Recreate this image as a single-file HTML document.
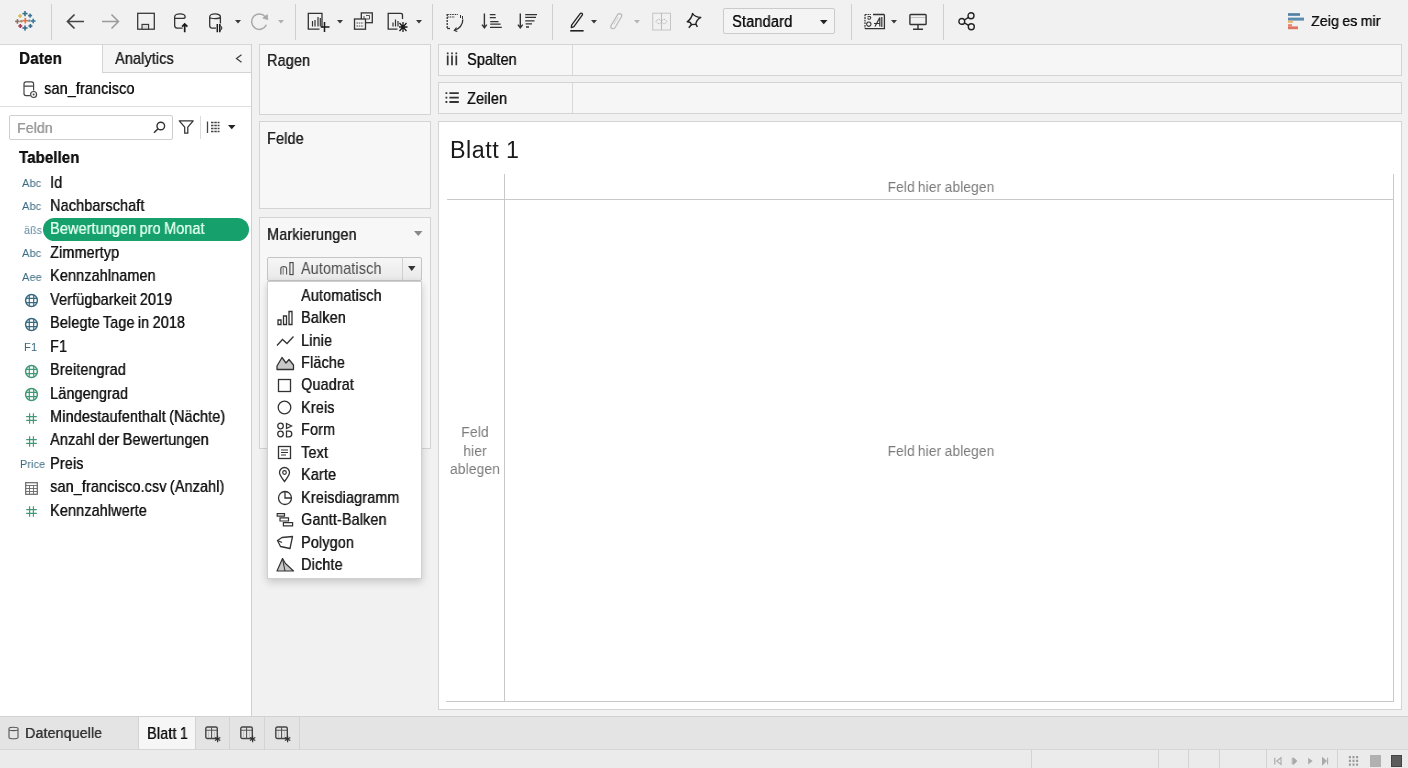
<!DOCTYPE html>
<html><head><meta charset="utf-8"><style>
html,body{margin:0;padding:0;width:1408px;height:768px;overflow:hidden;background:#efefef;}
body{position:relative;font-family:"Liberation Sans",sans-serif;}
.t{position:absolute;white-space:nowrap;line-height:20px;height:20px;will-change:transform;}
svg{overflow:visible}
</style></head><body>
<div style="position:absolute;left:0px;top:0px;width:1408px;height:717px;background:#f1f1f1"></div>
<div style="position:absolute;left:0px;top:44px;width:251px;height:673px;background:#ffffff"></div>
<div style="position:absolute;left:0px;top:44px;width:251px;height:1px;background:#d6d6d6"></div>
<div style="position:absolute;left:251px;top:44px;width:1px;height:673px;background:#d0d0d0"></div>
<div style="position:absolute;left:102px;top:45px;width:149px;height:27px;background:#f5f5f5"></div>
<div style="position:absolute;left:102px;top:45px;width:1px;height:28px;background:#d4d4d4"></div>
<div style="position:absolute;left:102px;top:72px;width:149px;height:1px;background:#d4d4d4"></div>
<div style="position:absolute;left:0px;top:106px;width:251px;height:1px;background:#dedede"></div>
<div style="position:absolute;left:8.5px;top:115px;width:164px;height:25px;background:#fff;border:1px solid #cfcfcf;border-radius:2px;box-sizing:border-box"></div>
<div style="position:absolute;left:200px;top:116px;width:1px;height:23px;background:#dcdcdc"></div>
<div style="position:absolute;left:259px;top:44px;width:172px;height:71px;background:#f7f7f7;border:1px solid #d4d4d4;box-sizing:border-box"></div>
<div style="position:absolute;left:259px;top:121px;width:172px;height:88px;background:#f7f7f7;border:1px solid #d4d4d4;box-sizing:border-box"></div>
<div style="position:absolute;left:259px;top:217px;width:172px;height:232px;background:#f7f7f7;border:1px solid #d4d4d4;box-sizing:border-box"></div>
<div style="position:absolute;left:438px;top:44px;width:964px;height:32px;background:#f6f6f6;border:1px solid #d4d4d4;box-sizing:border-box"></div>
<div style="position:absolute;left:572px;top:45px;width:1px;height:30px;background:#d8d8d8"></div>
<div style="position:absolute;left:438px;top:82px;width:964px;height:32px;background:#f6f6f6;border:1px solid #d4d4d4;box-sizing:border-box"></div>
<div style="position:absolute;left:572px;top:83px;width:1px;height:30px;background:#d8d8d8"></div>
<div style="position:absolute;left:438px;top:121px;width:964px;height:589px;background:#ffffff;border:1px solid #d4d4d4;box-sizing:border-box"></div>
<div style="position:absolute;left:504px;top:174px;width:1px;height:528px;background:#c9c9c9"></div>
<div style="position:absolute;left:447px;top:199px;width:947px;height:1px;background:#c9c9c9"></div>
<div style="position:absolute;left:446px;top:701px;width:948px;height:1px;background:#c9c9c9"></div>
<div style="position:absolute;left:1393px;top:174px;width:1px;height:528px;background:#c9c9c9"></div>
<div style="position:absolute;left:0px;top:716px;width:1408px;height:34px;background:#e4e4e4"></div>
<div style="position:absolute;left:0px;top:716px;width:1408px;height:1px;background:#d2d2d2"></div>
<div style="position:absolute;left:0px;top:749px;width:1408px;height:1px;background:#d6d6d6"></div>
<div style="position:absolute;left:0px;top:750px;width:1408px;height:18px;background:#ebebeb"></div>
<div style="position:absolute;left:139px;top:717px;width:56px;height:32px;background:#f6f6f6"></div>
<div style="position:absolute;left:138px;top:717px;width:1px;height:32px;background:#d3d3d3"></div>
<div style="position:absolute;left:195px;top:717px;width:1px;height:32px;background:#d3d3d3"></div>
<div style="position:absolute;left:229px;top:717px;width:1px;height:32px;background:#d3d3d3"></div>
<div style="position:absolute;left:264px;top:717px;width:1px;height:32px;background:#d3d3d3"></div>
<div style="position:absolute;left:299px;top:717px;width:1px;height:32px;background:#d3d3d3"></div>
<div style="position:absolute;left:1031px;top:750px;width:1px;height:18px;background:#d3d3d3"></div>
<div style="position:absolute;left:1158px;top:750px;width:1px;height:18px;background:#d3d3d3"></div>
<div style="position:absolute;left:1188px;top:750px;width:1px;height:18px;background:#d3d3d3"></div>
<div style="position:absolute;left:1219px;top:750px;width:1px;height:18px;background:#d3d3d3"></div>
<div style="position:absolute;left:1266px;top:750px;width:1px;height:18px;background:#d3d3d3"></div>
<div style="position:absolute;left:1337px;top:750px;width:1px;height:18px;background:#d3d3d3"></div>
<div style="position:absolute;left:51px;top:4px;width:1px;height:36px;background:#cfcfcf"></div>
<div style="position:absolute;left:295px;top:4px;width:1px;height:36px;background:#cfcfcf"></div>
<div style="position:absolute;left:432px;top:4px;width:1px;height:36px;background:#cfcfcf"></div>
<div style="position:absolute;left:552px;top:4px;width:1px;height:36px;background:#cfcfcf"></div>
<div style="position:absolute;left:851px;top:4px;width:1px;height:36px;background:#cfcfcf"></div>
<div style="position:absolute;left:943px;top:4px;width:1px;height:36px;background:#cfcfcf"></div>
<svg style="position:absolute;left:14px;top:7px" width="24" height="28" viewBox="0 0 24 28"><defs><filter id="lb" x="-20%" y="-20%" width="140%" height="140%"><feGaussianBlur stdDeviation="0.45"/></filter></defs><g filter="url(#lb)"><rect x="10.2" y="3.9999999999999996" width="1.6" height="5.2" fill="#3a6d8e"/><rect x="8.4" y="5.8" width="5.2" height="1.6" fill="#3a6d8e"/><rect x="15.3" y="6.6" width="1.6" height="4" fill="#3d7590"/><rect x="14.100000000000001" y="7.8" width="4" height="1.6" fill="#3d7590"/><rect x="18.400000000000002" y="11.7" width="1.6" height="4.6" fill="#3a7c9c"/><rect x="16.900000000000002" y="13.2" width="4.6" height="1.6" fill="#3a7c9c"/><rect x="15.599999999999998" y="17.0" width="1.6" height="4" fill="#3a6d8e"/><rect x="14.399999999999999" y="18.2" width="4" height="1.6" fill="#3a6d8e"/><rect x="10.2" y="18.4" width="1.6" height="5.2" fill="#3a6d8e"/><rect x="8.4" y="20.2" width="5.2" height="1.6" fill="#3a6d8e"/><rect x="5.500000000000001" y="17.0" width="1.6" height="4" fill="#a83a56"/><rect x="4.300000000000001" y="18.2" width="4" height="1.6" fill="#a83a56"/><rect x="2.5999999999999988" y="12.099999999999998" width="1.6" height="4.6" fill="#8c7462"/><rect x="1.0999999999999988" y="13.599999999999998" width="4.6" height="1.6" fill="#8c7462"/><rect x="5.300000000000002" y="7.0" width="1.6" height="4" fill="#d6bd5a"/><rect x="4.100000000000001" y="8.2" width="4" height="1.6" fill="#d6bd5a"/><rect x="10.5" y="10.899999999999999" width="1.6" height="5.6" fill="#e0763e"/><rect x="8.5" y="12.899999999999999" width="5.6" height="1.6" fill="#e0763e"/><rect x="6.599999999999999" y="12.899999999999999" width="1.6" height="2.6" fill="#b08a72"/><rect x="6.099999999999999" y="13.399999999999999" width="2.6" height="1.6" fill="#b08a72"/><rect x="14.599999999999998" y="12.5" width="1.6" height="2.6" fill="#7f9aab"/><rect x="14.099999999999998" y="13.0" width="2.6" height="1.6" fill="#7f9aab"/></g></svg>
<svg style="position:absolute;left:66px;top:13px" width="19" height="17" viewBox="0 0 19 17"><path d="M1.5 8.5H18M8.5 1.5L1.5 8.5L8.5 15.5" fill="none" stroke="#444" stroke-width="1.7"/></svg>
<svg style="position:absolute;left:101px;top:13px" width="19" height="17" viewBox="0 0 19 17"><path d="M1 8.5H17.5M10.5 1.5L17.5 8.5L10.5 15.5" fill="none" stroke="#9a9a9a" stroke-width="1.5"/></svg>
<svg style="position:absolute;left:137px;top:12px" width="18" height="19" viewBox="0 0 18 19"><rect x="0.7" y="1.3" width="16.6" height="15.9" fill="none" stroke="#333" stroke-width="1.25"/><rect x="5" y="12.4" width="6.6" height="4.8" fill="#dcdcdc" stroke="#333" stroke-width="1.1"/></svg>
<svg style="position:absolute;left:173px;top:12px" width="17" height="21" viewBox="0 0 17 21"><path d="M1.65 5C1.65 0.9 12.15 0.9 12.15 5C12.15 6.4 11 6.4 10 6.4H1.65M1.65 5V13.6Q1.65 16.05 4 16.05H9.6" fill="none" stroke="#333" stroke-width="1.3"/><path d="M11.7 20.3V11.9M9.1 14.6L11.7 11.9L14.4 14.6" fill="none" stroke="#1a1a1a" stroke-width="1.7"/></svg>
<svg style="position:absolute;left:208px;top:12px" width="16" height="21" viewBox="0 0 16 21"><path d="M1.7 5C1.7 0.9 12.4 0.9 12.4 5V11.6M1.7 5C1.7 7.2 12.4 7.2 12.4 5M1.7 5V13.6Q1.7 16.1 4 16.1H8" fill="none" stroke="#333" stroke-width="1.3"/><path d="M9.3 12V20.3M11.8 12V20.3" stroke="#1a1a1a" stroke-width="1.5"/><path d="M12.5 13.5L14 16L12.5 18.5" fill="none" stroke="#1a1a1a" stroke-width="1"/></svg>
<svg style="position:absolute;left:234.5px;top:20px" width="6" height="4" viewBox="0 0 6 4"><path d="M0 0H6L3 3.6Z" fill="#3a3a3a"/></svg>
<svg style="position:absolute;left:249px;top:12px" width="20" height="19" viewBox="0 0 20 19"><path d="M16.6 5.2A7.7 7.7 0 1 0 17.4 12.8" fill="none" stroke="#a8a8a8" stroke-width="1.5"/><path d="M13.8 6.2L18.8 7.6L18.3 2.6Z" fill="#a8a8a8" stroke="#a8a8a8" stroke-width="0.8" stroke-linejoin="round"/></svg>
<svg style="position:absolute;left:278.4px;top:20px" width="6" height="4" viewBox="0 0 6 4"><path d="M0 0H6L3 3.6Z" fill="#b0b0b0"/></svg>
<svg style="position:absolute;left:307px;top:12px" width="24" height="21" viewBox="0 0 24 21"><path d="M15 15.6V1.3H1.3V17.2H12.5" fill="none" stroke="#333" stroke-width="1.3"/><path d="M5.5 14.5V9M8 14.5V8M11 14.5V5M13.3 14.5V6" stroke="#333" stroke-width="1.2"/><path d="M17.5 10V20M13.8 15H22.5" stroke="#1a1a1a" stroke-width="1.5"/></svg>
<svg style="position:absolute;left:337.3px;top:20px" width="6" height="4" viewBox="0 0 6 4"><path d="M0 0H6L3 3.6Z" fill="#3a3a3a"/></svg>
<svg style="position:absolute;left:353px;top:11px" width="21" height="20" viewBox="0 0 21 20"><rect x="8.3" y="1.9" width="11" height="9.8" fill="none" stroke="#333" stroke-width="1.3"/><path d="M11 5V8.5M13 4.5H16.5V8H13" fill="none" stroke="#444" stroke-width="0.9"/><rect x="1.5" y="8" width="11" height="10.2" fill="#f2f2f2" stroke="#333" stroke-width="1.3"/><path d="M3.5 12H10.5M3.5 15H10.5" stroke="#444" stroke-width="1" stroke-dasharray="1.5 0.8"/></svg>
<svg style="position:absolute;left:387px;top:12px" width="22" height="21" viewBox="0 0 22 21"><path d="M15.5 7V3.2Q15.5 1.3 13.6 1.3H1.2V17.2H10.5" fill="none" stroke="#333" stroke-width="1.3"/><path d="M6 14.5V10.5M8.5 14.5V7.5M11 14.5V9" stroke="#333" stroke-width="1.2"/><path d="M12.5 11L19.5 19M19.5 11L12.5 19M16 10V20M12 15H20.5" stroke="#1a1a1a" stroke-width="1.3"/></svg>
<svg style="position:absolute;left:416px;top:20px" width="6" height="4" viewBox="0 0 6 4"><path d="M0 0H6L3 3.6Z" fill="#3a3a3a"/></svg>
<svg style="position:absolute;left:446px;top:13px" width="20" height="19" viewBox="0 0 20 19"><path d="M1.2 1.5H12M1.2 4H9" stroke="#333" stroke-width="1.1" stroke-dasharray="1.6 0.9"/><path d="M1.2 1V15.5" stroke="#333" stroke-width="1.3" stroke-dasharray="2 1"/><path d="M1.2 15.5H4" stroke="#333" stroke-width="1.3"/><path d="M16.8 6.5C17 12 13 16 8.5 17.3" fill="none" stroke="#333" stroke-width="1.3"/><path d="M10.5 14.5L8.3 17.4L11.3 18.6" fill="none" stroke="#333" stroke-width="1.1"/><path d="M14.5 2V5M16.5 3V6" stroke="#333" stroke-width="1"/></svg>
<svg style="position:absolute;left:481px;top:13px" width="22" height="17" viewBox="0 0 22 17"><path d="M3.4 0.5V14.6M1 11.6L3.4 14.8L5.8 11.6" fill="none" stroke="#333" stroke-width="1.4"/><path d="M8.8 1.6H14.5M8.8 4.6H14.8M9.2 8.6H17.5M9.2 11.2H19.6M9 14.4H20.8" stroke="#333" stroke-width="1.3"/></svg>
<svg style="position:absolute;left:517px;top:13px" width="21" height="17" viewBox="0 0 21 17"><path d="M3.3 0.5V14.6M0.9 11.6L3.3 14.8L5.7 11.6" fill="none" stroke="#333" stroke-width="1.4"/><path d="M8.2 1.6H20M8.2 4.4H19M8.2 7.8H17.5M8.6 10.8H15M9 14H12" stroke="#333" stroke-width="1.3"/></svg>
<svg style="position:absolute;left:569px;top:12px" width="16" height="21" viewBox="0 0 16 21"><path d="M2.6 13.2L11.2 1.6C12 0.5 14.1 1.6 13.4 2.8L4.9 14.6L2.3 15.6Z" fill="none" stroke="#222" stroke-width="1.3" stroke-linejoin="round"/><path d="M1.2 18.8H14.6" stroke="#222" stroke-width="1.6"/></svg>
<svg style="position:absolute;left:591.4px;top:20px" width="6" height="4" viewBox="0 0 6 4"><path d="M0 0H6L3 3.6Z" fill="#3a3a3a"/></svg>
<svg style="position:absolute;left:609px;top:12px" width="14" height="19" viewBox="0 0 14 19"><path d="M2 13.6L8.6 2.6C9.9 0.6 13.6 2 12.6 4.6L6 15.8C4.6 17.8 0.8 16.4 2 13.6Z" fill="none" stroke="#b8b8b8" stroke-width="1.1"/><path d="M5 12.2L9.4 5" stroke="#c0c0c0" stroke-width="0.9" stroke-dasharray="1.4 0.8"/></svg>
<svg style="position:absolute;left:634px;top:20px" width="6" height="4" viewBox="0 0 6 4"><path d="M0 0H6L3 3.6Z" fill="#b4b4b4"/></svg>
<svg style="position:absolute;left:652px;top:12px" width="20" height="19" viewBox="0 0 20 19"><rect x="0.7" y="1.2" width="17.8" height="16.8" fill="none" stroke="#c4c4c4" stroke-width="1"/><path d="M9.5 1V18" stroke="#bbb" stroke-width="1"/><path d="M4 9.5C6 6.5 8 6.5 9.5 9.5C11 6.5 13 6.5 15 9.5C13 12.5 11 12.5 9.5 9.5C8 12.5 6 12.5 4 9.5Z" fill="none" stroke="#b0b0b0" stroke-width="0.9" stroke-dasharray="1.2 0.6"/></svg>
<svg style="position:absolute;left:686px;top:12px" width="16" height="17" viewBox="0 0 16 17"><path d="M6.6 1.5Q8.8 5.2 14.8 5.4Q10.2 8 9.8 12.2L5.5 12.6Q4.6 9.6 1.2 9.7Q5.6 6.6 6.6 1.5Z" fill="none" stroke="#222" stroke-width="1.4" stroke-linejoin="round"/><path d="M5.5 12.6L2.8 15.8M9.8 12.2L11.4 14.9" stroke="#222" stroke-width="1.5"/></svg>
<div style="position:absolute;left:722.5px;top:8px;width:112px;height:26px;background:#f4f4f4;border:1px solid #cbcbcb;border-radius:2px;box-sizing:border-box"></div>
<svg style="position:absolute;left:820px;top:19.5px" width="8" height="5" viewBox="0 0 8 5"><path d="M0 0H7.5L3.75 4.2Z" fill="#222"/></svg>
<svg style="position:absolute;left:864px;top:13px" width="22" height="17" viewBox="0 0 22 17"><path d="M20.4 1.5V15.6H1M20.4 1.5H9" fill="none" stroke="#333" stroke-width="1.3"/><path d="M1 1.5H7M1 1.5V15.6" fill="none" stroke="#333" stroke-width="1.2" stroke-dasharray="1.8 0.8"/><path d="M3.5 4.2C5 2.8 7.5 3.5 6.5 5.5C5.5 7 3.5 6 4 5M4.8 9A2.2 2.2 0 1 0 4.81 9" fill="none" stroke="#333" stroke-width="1.1"/><path d="M11 13.5L15.8 4.5V13.5M10 10.5H15.5M17.8 4V14" fill="none" stroke="#333" stroke-width="1.2"/></svg>
<svg style="position:absolute;left:891px;top:20px" width="6" height="4" viewBox="0 0 6 4"><path d="M0 0H6L3 3.6Z" fill="#3a3a3a"/></svg>
<svg style="position:absolute;left:908px;top:13px" width="20" height="18" viewBox="0 0 20 18"><rect x="1.9" y="1.5" width="16.2" height="10" rx="0.8" fill="none" stroke="#333" stroke-width="1.4"/><path d="M3 4.5H17" stroke="#c0c0c0" stroke-width="1"/><path d="M10 11.5V16.3M5 16.3H15" stroke="#333" stroke-width="1.4"/></svg>
<svg style="position:absolute;left:958px;top:12px" width="18" height="19" viewBox="0 0 18 19"><circle cx="13" cy="3.8" r="3" fill="none" stroke="#222" stroke-width="1.4"/><circle cx="3.8" cy="9.4" r="2.9" fill="none" stroke="#222" stroke-width="1.4"/><circle cx="13.3" cy="14.8" r="3" fill="none" stroke="#222" stroke-width="1.4"/><path d="M6.4 8L10.5 5.3M6.4 10.9L10.6 13.3" stroke="#222" stroke-width="1.4"/></svg>
<svg style="position:absolute;left:1288px;top:12px" width="17" height="18" viewBox="0 0 17 18"><rect x="0" y="1.2" width="12" height="2.6" fill="#4d7ea3"/><rect x="0" y="5.6" width="16" height="3" fill="#5a8cb0"/><rect x="0" y="8.6" width="5" height="2.2" fill="#e9b46a"/><rect x="0" y="12.2" width="4" height="2.2" fill="#e48270"/><rect x="0" y="14.4" width="10" height="2.8" fill="#e07462"/></svg>
<div class="t" style="left:731.60px;top:12.00px;font-size:15.91px;font-weight:400;color:#111;transform:scaleX(0.9174);letter-spacing:0.131px;word-spacing:-0.872px;transform-origin:0 0;text-shadow:0.35px 0 0 #111;">Standard</div>
<div class="t" style="left:1310.50px;top:11.00px;font-size:15.37px;font-weight:400;color:#111;transform:scaleX(0.9174);letter-spacing:0.131px;word-spacing:-0.872px;transform-origin:0 0;text-shadow:0.35px 0 0 #111;">Zeig es mir</div>
<div class="t" style="left:18.60px;top:49.00px;font-size:16.57px;font-weight:700;color:#111;transform:scaleX(0.9174);letter-spacing:0.131px;word-spacing:-0.872px;transform-origin:0 0;text-shadow:0.35px 0 0 #111;">Daten</div>
<div class="t" style="left:115.00px;top:49.00px;font-size:15.70px;font-weight:400;color:#222;transform:scaleX(0.9174);letter-spacing:0.131px;word-spacing:-0.872px;transform-origin:0 0;text-shadow:0.35px 0 0 #222;">Analytics</div>
<svg style="position:absolute;left:235px;top:54px" width="8" height="9" viewBox="0 0 8 9"><path d="M6.5 0.7L1.5 4.5L6.5 8.3" fill="none" stroke="#444" stroke-width="1.3"/></svg>
<svg style="position:absolute;left:23px;top:81px" width="16" height="18" viewBox="0 0 16 18"><path d="M1 3Q1 0.9 3 0.9H8.6Q10.6 0.9 10.6 3V9.5M1 5.2H10.6M1 3V12.6Q1 14.6 3 14.6H7" fill="none" stroke="#444" stroke-width="1.2"/><circle cx="10.6" cy="13.5" r="3" fill="#fff" stroke="#444" stroke-width="1.2"/><circle cx="10.6" cy="13.5" r="1" fill="#444"/></svg>
<div class="t" style="left:44.00px;top:79.00px;font-size:15.70px;font-weight:400;color:#111;transform:scaleX(0.9174);letter-spacing:0.131px;word-spacing:-0.872px;transform-origin:0 0;text-shadow:0.35px 0 0 #111;">san_francisco</div>
<div class="t" style="left:17.00px;top:118.00px;font-size:15.26px;font-weight:400;color:#9a9a9a;transform:scaleX(0.9174);letter-spacing:0.131px;word-spacing:-0.872px;transform-origin:0 0;text-shadow:0.35px 0 0 #9a9a9a;">Feldn</div>
<svg style="position:absolute;left:153px;top:121px" width="13" height="13" viewBox="0 0 13 13"><circle cx="7.8" cy="5" r="3.8" fill="none" stroke="#333" stroke-width="1.4"/><path d="M5 7.8L1 11.8" stroke="#333" stroke-width="1.6"/></svg>
<svg style="position:absolute;left:178px;top:119px" width="17" height="16" viewBox="0 0 17 16"><path d="M1.3 1.8H15.2L9.8 8.2V14.2H6.7V8.2Z" fill="none" stroke="#333" stroke-width="1.25" stroke-linejoin="round"/></svg>
<svg style="position:absolute;left:206px;top:121px" width="15" height="13" viewBox="0 0 15 13"><path d="M1.5 0.5V12" stroke="#444" stroke-width="1.3"/><path d="M5 1.5H13.5M5 4.5H13.5M5 7.5H13.5M5 10.5H13.5" stroke="#444" stroke-width="1.3" stroke-dasharray="2.5 0.8"/></svg>
<svg style="position:absolute;left:227.5px;top:125px" width="8" height="5" viewBox="0 0 8 5"><path d="M0 0H7.5L3.75 4.2Z" fill="#222"/></svg>
<div class="t" style="left:18.90px;top:147.00px;font-size:16.24px;font-weight:700;color:#111;transform:scaleX(0.9174);letter-spacing:0.131px;word-spacing:-0.872px;transform-origin:0 0;text-shadow:0.35px 0 0 #111;">Tabellen</div>
<div class="t" style="left:50.40px;top:173.00px;font-size:15.70px;font-weight:400;color:#151515;transform:scaleX(0.9174);letter-spacing:0.131px;word-spacing:-0.872px;transform-origin:0 0;text-shadow:0.35px 0 0 #151515;">Id</div>
<div class="t" style="left:22.40px;top:173.00px;font-size:11.33px;font-weight:400;color:#3a6a82;transform:scaleX(0.9709);letter-spacing:0.124px;word-spacing:-0.824px;transform-origin:0 0;">Abc</div>
<div class="t" style="left:50.40px;top:196.00px;font-size:15.70px;font-weight:400;color:#151515;transform:scaleX(0.9174);letter-spacing:0.131px;word-spacing:-0.872px;transform-origin:0 0;text-shadow:0.35px 0 0 #151515;">Nachbarschaft</div>
<div class="t" style="left:22.40px;top:196.00px;font-size:11.33px;font-weight:400;color:#3a6a82;transform:scaleX(0.9709);letter-spacing:0.124px;word-spacing:-0.824px;transform-origin:0 0;">Abc</div>
<div style="position:absolute;left:42.5px;top:218px;width:206px;height:23px;background:#15a06c;border-radius:11.5px"></div>
<div class="t" style="left:50.40px;top:219.00px;font-size:15.70px;font-weight:400;color:#dcfdea;transform:scaleX(0.9174);letter-spacing:0.131px;word-spacing:-0.872px;transform-origin:0 0;text-shadow:0.35px 0 0 #dcfdea;">Bewertungen pro Monat</div>
<div class="t" style="left:23.50px;top:220.00px;font-size:10.92px;font-weight:400;color:#5d87a0;transform:scaleX(0.9709);letter-spacing:0.124px;word-spacing:-0.824px;transform-origin:0 0;">äßs</div>
<div class="t" style="left:50.40px;top:243.00px;font-size:15.70px;font-weight:400;color:#151515;transform:scaleX(0.9174);letter-spacing:0.131px;word-spacing:-0.872px;transform-origin:0 0;text-shadow:0.35px 0 0 #151515;">Zimmertyp</div>
<div class="t" style="left:22.40px;top:243.00px;font-size:11.33px;font-weight:400;color:#3a6a82;transform:scaleX(0.9709);letter-spacing:0.124px;word-spacing:-0.824px;transform-origin:0 0;">Abc</div>
<div class="t" style="left:50.40px;top:266.00px;font-size:15.70px;font-weight:400;color:#151515;transform:scaleX(0.9174);letter-spacing:0.131px;word-spacing:-0.872px;transform-origin:0 0;text-shadow:0.35px 0 0 #151515;">Kennzahlnamen</div>
<div class="t" style="left:21.80px;top:267.00px;font-size:11.33px;font-weight:400;color:#3a6a82;transform:scaleX(0.9709);letter-spacing:0.124px;word-spacing:-0.824px;transform-origin:0 0;">Aee</div>
<div class="t" style="left:50.40px;top:290.00px;font-size:15.70px;font-weight:400;color:#151515;transform:scaleX(0.9174);letter-spacing:0.131px;word-spacing:-0.872px;transform-origin:0 0;text-shadow:0.35px 0 0 #151515;">Verfügbarkeit 2019</div>
<svg style="position:absolute;left:24.3px;top:293.25px" width="15" height="15" viewBox="0 0 15 15"><circle cx="7.5" cy="7.5" r="5.9" fill="none" stroke="#3a6a82" stroke-width="1.5"/><path d="M5.3 2V13M9.7 2V13M2 5.3H13M2 9.7H13" stroke="#3a6a82" stroke-width="1.2"/></svg>
<div class="t" style="left:50.40px;top:313.00px;font-size:15.70px;font-weight:400;color:#151515;transform:scaleX(0.9174);letter-spacing:0.131px;word-spacing:-0.872px;transform-origin:0 0;text-shadow:0.35px 0 0 #151515;">Belegte Tage in 2018</div>
<svg style="position:absolute;left:24.3px;top:316.7px" width="15" height="15" viewBox="0 0 15 15"><circle cx="7.5" cy="7.5" r="5.9" fill="none" stroke="#3a6a82" stroke-width="1.5"/><path d="M5.3 2V13M9.7 2V13M2 5.3H13M2 9.7H13" stroke="#3a6a82" stroke-width="1.2"/></svg>
<div class="t" style="left:50.40px;top:337.00px;font-size:15.70px;font-weight:400;color:#151515;transform:scaleX(0.9174);letter-spacing:0.131px;word-spacing:-0.872px;transform-origin:0 0;text-shadow:0.35px 0 0 #151515;">F1</div>
<div class="t" style="left:24.00px;top:337.00px;font-size:11.12px;font-weight:400;color:#3a6a82;transform:scaleX(0.9709);letter-spacing:0.124px;word-spacing:-0.824px;transform-origin:0 0;">F1</div>
<div class="t" style="left:50.40px;top:360.00px;font-size:15.70px;font-weight:400;color:#151515;transform:scaleX(0.9174);letter-spacing:0.131px;word-spacing:-0.872px;transform-origin:0 0;text-shadow:0.35px 0 0 #151515;">Breitengrad</div>
<svg style="position:absolute;left:24.3px;top:363.6px" width="15" height="15" viewBox="0 0 15 15"><circle cx="7.5" cy="7.5" r="5.9" fill="none" stroke="#3f9a74" stroke-width="1.5"/><path d="M5.3 2V13M9.7 2V13M2 5.3H13M2 9.7H13" stroke="#3f9a74" stroke-width="1.2"/></svg>
<div class="t" style="left:50.40px;top:384.00px;font-size:15.70px;font-weight:400;color:#151515;transform:scaleX(0.9174);letter-spacing:0.131px;word-spacing:-0.872px;transform-origin:0 0;text-shadow:0.35px 0 0 #151515;">Längengrad</div>
<svg style="position:absolute;left:24.3px;top:387.04999999999995px" width="15" height="15" viewBox="0 0 15 15"><circle cx="7.5" cy="7.5" r="5.9" fill="none" stroke="#3f9a74" stroke-width="1.5"/><path d="M5.3 2V13M9.7 2V13M2 5.3H13M2 9.7H13" stroke="#3f9a74" stroke-width="1.2"/></svg>
<div class="t" style="left:50.40px;top:407.00px;font-size:15.70px;font-weight:400;color:#151515;transform:scaleX(0.9174);letter-spacing:0.131px;word-spacing:-0.872px;transform-origin:0 0;text-shadow:0.35px 0 0 #151515;">Mindestaufenthalt (Nächte)</div>
<svg style="position:absolute;left:25px;top:411.5px" width="13" height="13" viewBox="0 0 13 13"><path d="M4.6 1.2V11.8M8.4 1.2V11.8M1.2 4.6H11.8M1.2 8.4H11.8" stroke="#3f9a74" stroke-width="1.15"/></svg>
<div class="t" style="left:50.40px;top:430.00px;font-size:15.70px;font-weight:400;color:#151515;transform:scaleX(0.9174);letter-spacing:0.131px;word-spacing:-0.872px;transform-origin:0 0;text-shadow:0.35px 0 0 #151515;">Anzahl der Bewertungen</div>
<svg style="position:absolute;left:25px;top:434.95px" width="13" height="13" viewBox="0 0 13 13"><path d="M4.6 1.2V11.8M8.4 1.2V11.8M1.2 4.6H11.8M1.2 8.4H11.8" stroke="#3f9a74" stroke-width="1.15"/></svg>
<div class="t" style="left:50.40px;top:454.00px;font-size:15.70px;font-weight:400;color:#151515;transform:scaleX(0.9174);letter-spacing:0.131px;word-spacing:-0.872px;transform-origin:0 0;text-shadow:0.35px 0 0 #151515;">Preis</div>
<div class="t" style="left:19.60px;top:454.00px;font-size:11.12px;font-weight:400;color:#3a6a82;transform:scaleX(0.9709);letter-spacing:0.124px;word-spacing:-0.824px;transform-origin:0 0;">Price</div>
<div class="t" style="left:50.40px;top:477.00px;font-size:15.70px;font-weight:400;color:#151515;transform:scaleX(0.9174);letter-spacing:0.131px;word-spacing:-0.872px;transform-origin:0 0;text-shadow:0.35px 0 0 #151515;">san_francisco.csv (Anzahl)</div>
<svg style="position:absolute;left:25px;top:481.84999999999997px" width="13" height="13" viewBox="0 0 13 13"><rect x="0.7" y="0.7" width="11.6" height="11.6" fill="none" stroke="#666" stroke-width="1.2"/><path d="M0.7 3.5H12.3M0.7 6.5H12.3M0.7 9.5H12.3M4.5 3.5V12.3M8.5 3.5V12.3" stroke="#666" stroke-width="0.9"/></svg>
<div class="t" style="left:50.40px;top:501.00px;font-size:15.70px;font-weight:400;color:#151515;transform:scaleX(0.9174);letter-spacing:0.131px;word-spacing:-0.872px;transform-origin:0 0;text-shadow:0.35px 0 0 #151515;">Kennzahlwerte</div>
<svg style="position:absolute;left:25px;top:505.29999999999995px" width="13" height="13" viewBox="0 0 13 13"><path d="M4.6 1.2V11.8M8.4 1.2V11.8M1.2 4.6H11.8M1.2 8.4H11.8" stroke="#3f9a74" stroke-width="1.15"/></svg>
<div class="t" style="left:267.10px;top:51.00px;font-size:15.70px;font-weight:400;color:#222;transform:scaleX(0.9174);letter-spacing:0.131px;word-spacing:-0.872px;transform-origin:0 0;text-shadow:0.35px 0 0 #222;">Ragen</div>
<div class="t" style="left:267.10px;top:129.00px;font-size:15.70px;font-weight:400;color:#222;transform:scaleX(0.9174);letter-spacing:0.131px;word-spacing:-0.872px;transform-origin:0 0;text-shadow:0.35px 0 0 #222;">Felde</div>
<div class="t" style="left:267.30px;top:225.00px;font-size:15.70px;font-weight:400;color:#222;transform:scaleX(0.9174);letter-spacing:0.131px;word-spacing:-0.872px;transform-origin:0 0;text-shadow:0.35px 0 0 #222;">Markierungen</div>
<svg style="position:absolute;left:414px;top:231px" width="9" height="6" viewBox="0 0 9 6"><path d="M0 0H8.5L4.25 5Z" fill="#888"/></svg>
<div style="position:absolute;left:267px;top:257px;width:155px;height:24px;background:linear-gradient(#f6f6f6,#e9e9e9);border:1px solid #c4c4c4;border-radius:2px;box-sizing:border-box"></div>
<div style="position:absolute;left:402px;top:258px;width:1px;height:22px;background:#d0d0d0"></div>
<svg style="position:absolute;left:408px;top:266px" width="8" height="6" viewBox="0 0 8 6"><path d="M0 0H7.5L3.75 5Z" fill="#333"/></svg>
<svg style="position:absolute;left:279px;top:261px" width="16" height="15" viewBox="0 0 16 15"><path d="M1.8 13.6V7.6Q1.8 5.6 4.8 5.6Q7.6 5.6 7.6 7.6V13.6" fill="none" stroke="#555" stroke-width="1.1"/><path d="M3 7V13.6M4.5 6.5V13.6" stroke="#999" stroke-width="0.9"/><rect x="10.9" y="1.6" width="3.2" height="12" fill="none" stroke="#444" stroke-width="1.1"/></svg>
<div class="t" style="left:301.00px;top:259.00px;font-size:15.70px;font-weight:400;color:#4a4a4a;transform:scaleX(0.9174);letter-spacing:0.131px;word-spacing:-0.872px;transform-origin:0 0;">Automatisch</div>
<div style="position:absolute;left:267px;top:281px;width:155px;height:298px;background:#fff;border:1px solid #cfcfcf;box-sizing:border-box;box-shadow:0 3px 8px rgba(0,0,0,0.18)"></div>
<div class="t" style="left:301.20px;top:286.00px;font-size:15.70px;font-weight:400;color:#1a1a1a;transform:scaleX(0.9174);letter-spacing:0.131px;word-spacing:-0.872px;transform-origin:0 0;text-shadow:0.35px 0 0 #1a1a1a;">Automatisch</div>
<div class="t" style="left:301.20px;top:308.00px;font-size:15.70px;font-weight:400;color:#1a1a1a;transform:scaleX(0.9174);letter-spacing:0.131px;word-spacing:-0.872px;transform-origin:0 0;text-shadow:0.35px 0 0 #1a1a1a;">Balken</div>
<svg style="position:absolute;left:276px;top:310px" width="18" height="16" viewBox="0 0 18 16"><path d="M2 14.5V10H5V14.5ZM7.5 14.5V6H10.5V14.5ZM13 14.5V1.5H16V14.5Z" fill="none" stroke="#333" stroke-width="1.3"/></svg>
<div class="t" style="left:301.20px;top:331.00px;font-size:15.70px;font-weight:400;color:#1a1a1a;transform:scaleX(0.9174);letter-spacing:0.131px;word-spacing:-0.872px;transform-origin:0 0;text-shadow:0.35px 0 0 #1a1a1a;">Linie</div>
<svg style="position:absolute;left:276px;top:335px" width="19" height="12" viewBox="0 0 19 12"><path d="M1 10.5L6.5 4.5L11 8.5L17.5 1.5" fill="none" stroke="#333" stroke-width="1.3"/></svg>
<div class="t" style="left:301.20px;top:353.00px;font-size:15.70px;font-weight:400;color:#1a1a1a;transform:scaleX(0.9174);letter-spacing:0.131px;word-spacing:-0.872px;transform-origin:0 0;text-shadow:0.35px 0 0 #1a1a1a;">Fläche</div>
<svg style="position:absolute;left:276px;top:356px" width="19" height="15" viewBox="0 0 19 15"><path d="M1 13.5V10L6 1.5L10 7L13 3.5L17.5 9V13.5Z" fill="#c8c8c8" stroke="#333" stroke-width="1.3" stroke-linejoin="round"/></svg>
<div class="t" style="left:301.20px;top:375.00px;font-size:15.70px;font-weight:400;color:#1a1a1a;transform:scaleX(0.9174);letter-spacing:0.131px;word-spacing:-0.872px;transform-origin:0 0;text-shadow:0.35px 0 0 #1a1a1a;">Quadrat</div>
<svg style="position:absolute;left:277px;top:378px" width="15" height="15" viewBox="0 0 15 15"><rect x="1.5" y="1.5" width="12" height="12" fill="none" stroke="#333" stroke-width="1.3"/></svg>
<div class="t" style="left:301.20px;top:398.00px;font-size:15.70px;font-weight:400;color:#1a1a1a;transform:scaleX(0.9174);letter-spacing:0.131px;word-spacing:-0.872px;transform-origin:0 0;text-shadow:0.35px 0 0 #1a1a1a;">Kreis</div>
<svg style="position:absolute;left:277px;top:400px" width="15" height="15" viewBox="0 0 15 15"><circle cx="7.5" cy="7.5" r="6.3" fill="none" stroke="#333" stroke-width="1.3"/></svg>
<div class="t" style="left:301.20px;top:420.00px;font-size:15.70px;font-weight:400;color:#1a1a1a;transform:scaleX(0.9174);letter-spacing:0.131px;word-spacing:-0.872px;transform-origin:0 0;text-shadow:0.35px 0 0 #1a1a1a;">Form</div>
<svg style="position:absolute;left:276px;top:422px" width="18" height="16" viewBox="0 0 18 16"><circle cx="4.5" cy="4" r="2.8" fill="none" stroke="#333" stroke-width="1.3"/><circle cx="4.5" cy="12" r="2.8" fill="none" stroke="#333" stroke-width="1.3"/><path d="M10.5 1.5L15.5 4L10.5 6.5Z" fill="none" stroke="#333" stroke-width="1.3"/><path d="M10.5 9.2H13A2.8 2.8 0 0 1 13 14.8H10.5Z" fill="none" stroke="#333" stroke-width="1.3"/></svg>
<div class="t" style="left:301.20px;top:443.00px;font-size:15.70px;font-weight:400;color:#1a1a1a;transform:scaleX(0.9174);letter-spacing:0.131px;word-spacing:-0.872px;transform-origin:0 0;text-shadow:0.35px 0 0 #1a1a1a;">Text</div>
<svg style="position:absolute;left:277px;top:445px" width="15" height="15" viewBox="0 0 15 15"><rect x="1.5" y="1.5" width="12" height="12" fill="none" stroke="#333" stroke-width="1.3"/><path d="M4 5H11M4 7.5H11M4 10H9" stroke="#333" stroke-width="1"/></svg>
<div class="t" style="left:301.20px;top:465.00px;font-size:15.70px;font-weight:400;color:#1a1a1a;transform:scaleX(0.9174);letter-spacing:0.131px;word-spacing:-0.872px;transform-origin:0 0;text-shadow:0.35px 0 0 #1a1a1a;">Karte</div>
<svg style="position:absolute;left:278px;top:467px" width="13" height="16" viewBox="0 0 13 16"><path d="M6.5 14.5C3 10 1.5 7.5 1.5 5.5A5 5 0 0 1 11.5 5.5C11.5 7.5 10 10 6.5 14.5Z" fill="none" stroke="#333" stroke-width="1.3"/><circle cx="6.5" cy="5.5" r="1.8" fill="none" stroke="#333" stroke-width="1.2"/></svg>
<div class="t" style="left:301.20px;top:488.00px;font-size:15.70px;font-weight:400;color:#1a1a1a;transform:scaleX(0.9174);letter-spacing:0.131px;word-spacing:-0.872px;transform-origin:0 0;text-shadow:0.35px 0 0 #1a1a1a;">Kreisdiagramm</div>
<svg style="position:absolute;left:277px;top:490px" width="16" height="16" viewBox="0 0 16 16"><circle cx="8" cy="8" r="6.5" fill="none" stroke="#333" stroke-width="1.3"/><path d="M8 1.5V8H14.5" fill="none" stroke="#333" stroke-width="1.3"/></svg>
<div class="t" style="left:301.20px;top:510.00px;font-size:15.70px;font-weight:400;color:#1a1a1a;transform:scaleX(0.9174);letter-spacing:0.131px;word-spacing:-0.872px;transform-origin:0 0;text-shadow:0.35px 0 0 #1a1a1a;">Gantt-Balken</div>
<svg style="position:absolute;left:276px;top:512px" width="18" height="16" viewBox="0 0 18 16"><path d="M1.2 1.6H8.5V4.2H1.2ZM4 5.8H12.5V9H4ZM7.4 10.6H16.6V13.8H7.4Z" fill="none" stroke="#333" stroke-width="1.2"/></svg>
<div class="t" style="left:301.20px;top:533.00px;font-size:15.70px;font-weight:400;color:#1a1a1a;transform:scaleX(0.9174);letter-spacing:0.131px;word-spacing:-0.872px;transform-origin:0 0;text-shadow:0.35px 0 0 #1a1a1a;">Polygon</div>
<svg style="position:absolute;left:276px;top:535px" width="18" height="15" viewBox="0 0 18 15"><path d="M1.5 5.5L6 2.5L16.5 1.5L14 13.5L4.5 11.5Z" fill="none" stroke="#333" stroke-width="1.3" stroke-linejoin="round"/><path d="M1.5 5.5L6 7.5" stroke="#333" stroke-width="1.1"/></svg>
<div class="t" style="left:301.20px;top:555.00px;font-size:15.70px;font-weight:400;color:#1a1a1a;transform:scaleX(0.9174);letter-spacing:0.131px;word-spacing:-0.872px;transform-origin:0 0;text-shadow:0.35px 0 0 #1a1a1a;">Dichte</div>
<svg style="position:absolute;left:276px;top:557px" width="19" height="15" viewBox="0 0 19 15"><path d="M1 14L6.5 1.5L9.5 6.5L17.5 14Z" fill="#c8c8c8" stroke="#333" stroke-width="1.2" stroke-linejoin="round"/><path d="M6.5 1.5L9 14" stroke="#333" stroke-width="1.1"/></svg>
<svg style="position:absolute;left:445px;top:52px" width="13" height="14" viewBox="0 0 13 14"><path d="M2.7 0.6V2.2M7 0.6V2.2M11.3 0.6V2.2" stroke="#333" stroke-width="1.7"/><path d="M2.7 3.6V13.2M7 3.6V13.2M11.3 3.6V13.2" stroke="#333" stroke-width="1.7"/></svg>
<div class="t" style="left:466.80px;top:50.00px;font-size:15.70px;font-weight:400;color:#111;transform:scaleX(0.9174);letter-spacing:0.131px;word-spacing:-0.872px;transform-origin:0 0;text-shadow:0.35px 0 0 #111;">Spalten</div>
<svg style="position:absolute;left:444px;top:91px" width="16" height="13" viewBox="0 0 16 13"><path d="M1.5 2.2H3.3M1.5 6.6H3.3M1.5 11H3.3" stroke="#333" stroke-width="1.8"/><path d="M5.4 2.2H14.8M5.4 6.6H14.8M5.4 11H14.8" stroke="#333" stroke-width="1.8"/></svg>
<div class="t" style="left:466.50px;top:89.00px;font-size:15.70px;font-weight:400;color:#111;transform:scaleX(0.9174);letter-spacing:0.131px;word-spacing:-0.872px;transform-origin:0 0;text-shadow:0.35px 0 0 #111;">Zeilen</div>
<div class="t" style="left:450.20px;top:140.00px;font-size:23.30px;font-weight:400;color:#1a1a1a;transform-origin:0 0;letter-spacing:0.5px;">Blatt 1</div>
<div class="t" style="left:791.00px;width:300px;text-align:center;top:177.00px;font-size:15.04px;font-weight:400;color:#7b7b7b;transform:scaleX(0.9174);letter-spacing:0.131px;word-spacing:-0.872px;transform-origin:50% 0;">Feld hier ablegen</div>
<div class="t" style="left:791.00px;width:300px;text-align:center;top:441.00px;font-size:15.04px;font-weight:400;color:#7b7b7b;transform:scaleX(0.9174);letter-spacing:0.131px;word-spacing:-0.872px;transform-origin:50% 0;">Feld hier ablegen</div>
<div class="t" style="left:445.00px;width:60px;text-align:center;top:422.00px;font-size:15.04px;font-weight:400;color:#7b7b7b;transform:scaleX(0.9174);letter-spacing:0.131px;word-spacing:-0.872px;transform-origin:50% 0;">Feld</div>
<div class="t" style="left:445.00px;width:60px;text-align:center;top:441.00px;font-size:15.04px;font-weight:400;color:#7b7b7b;transform:scaleX(0.9174);letter-spacing:0.131px;word-spacing:-0.872px;transform-origin:50% 0;">hier</div>
<div class="t" style="left:445.00px;width:60px;text-align:center;top:459.00px;font-size:15.04px;font-weight:400;color:#7b7b7b;transform:scaleX(0.9174);letter-spacing:0.131px;word-spacing:-0.872px;transform-origin:50% 0;">ablegen</div>
<svg style="position:absolute;left:8px;top:726px" width="11" height="14" viewBox="0 0 11 14"><path d="M1 2.5C1 0.8 10 0.8 10 2.5V11.5C10 13.2 1 13.2 1 11.5Z M1 3.5C1 5 10 5 10 3.5" fill="none" stroke="#555" stroke-width="1.1"/></svg>
<div class="t" style="left:25.00px;top:723.00px;font-size:15.48px;font-weight:400;color:#333;transform:scaleX(0.9174);letter-spacing:0.131px;word-spacing:-0.872px;transform-origin:0 0;text-shadow:0.35px 0 0 #333;">Datenquelle</div>
<div class="t" style="left:146.60px;top:724.00px;font-size:15.70px;font-weight:400;color:#111;transform:scaleX(0.9174);letter-spacing:0.131px;word-spacing:-0.872px;transform-origin:0 0;text-shadow:0.35px 0 0 #111;">Blatt 1</div>
<svg style="position:absolute;left:205px;top:726px" width="17" height="17" viewBox="0 0 17 17"><rect x="0.8" y="1" width="11.5" height="11.5" rx="1.5" fill="none" stroke="#444" stroke-width="1.4"/><path d="M1 4.2H12M6.55 1V12.5" stroke="#555" stroke-width="1.1"/><path d="M3.5 5.5V12M9.5 5.5V12" stroke="#bbb" stroke-width="0.8"/><path d="M12.6 9.8V16.2M9.9 11.4L15.3 14.6M15.3 11.4L9.9 14.6" stroke="#333" stroke-width="1.2"/></svg>
<svg style="position:absolute;left:240px;top:726px" width="17" height="17" viewBox="0 0 17 17"><rect x="0.8" y="1" width="11.5" height="11.5" rx="1.5" fill="none" stroke="#444" stroke-width="1.4"/><path d="M1 4.2H12M6.55 1V12.5" stroke="#555" stroke-width="1.1"/><path d="M3.5 5.5V12M9.5 5.5V12" stroke="#bbb" stroke-width="0.8"/><path d="M12.6 9.8V16.2M9.9 11.4L15.3 14.6M15.3 11.4L9.9 14.6" stroke="#333" stroke-width="1.2"/></svg>
<svg style="position:absolute;left:275px;top:726px" width="17" height="17" viewBox="0 0 17 17"><rect x="0.8" y="1" width="11.5" height="11.5" rx="1.5" fill="none" stroke="#444" stroke-width="1.4"/><path d="M1 4.2H12M6.55 1V12.5" stroke="#555" stroke-width="1.1"/><path d="M3.5 5.5V12M9.5 5.5V12" stroke="#bbb" stroke-width="0.8"/><path d="M12.6 9.8V16.2M9.9 11.4L15.3 14.6M15.3 11.4L9.9 14.6" stroke="#333" stroke-width="1.2"/></svg>
<svg style="position:absolute;left:1272px;top:757px" width="60" height="9" viewBox="0 0 60 9"><path d="M2.8 0.8V7.4" stroke="#aaa" stroke-width="1.2"/><path d="M9 0.8L4.8 4.1L9 7.4Z" fill="none" stroke="#aaa" stroke-width="1.1"/><path d="M20.2 0.8V7.4M21.5 0.8L24.8 4.1L21.5 7.4Z" fill="#aaa" stroke="#aaa" stroke-width="1"/><path d="M36.2 0.8L40.6 4.1L36.2 7.4Z" fill="#aaa"/><path d="M50.6 0.8L54.2 4.1L50.6 7.4ZM55.6 0.8V7.4" fill="#aaa" stroke="#aaa" stroke-width="1.1"/></svg>
<svg style="position:absolute;left:1347px;top:755px" width="13" height="12" viewBox="0 0 13 12"><path d="M1.9 2.1H3.9M5.5 2.1H7.5M9.1 2.1H11.1M1.9 5.9H3.9M5.5 5.9H7.5M9.1 5.9H11.1M1.9 9.7H3.9M5.5 9.7H7.5M9.1 9.7H11.1" stroke="#999" stroke-width="2.2"/></svg>
<div style="position:absolute;left:1370px;top:755px;width:11px;height:12px;background:#b1b1b1"></div>
<div style="position:absolute;left:1391px;top:755px;width:11px;height:12px;background:#5c5c5c;border:1px solid #444;box-sizing:border-box"></div>
</body></html>
